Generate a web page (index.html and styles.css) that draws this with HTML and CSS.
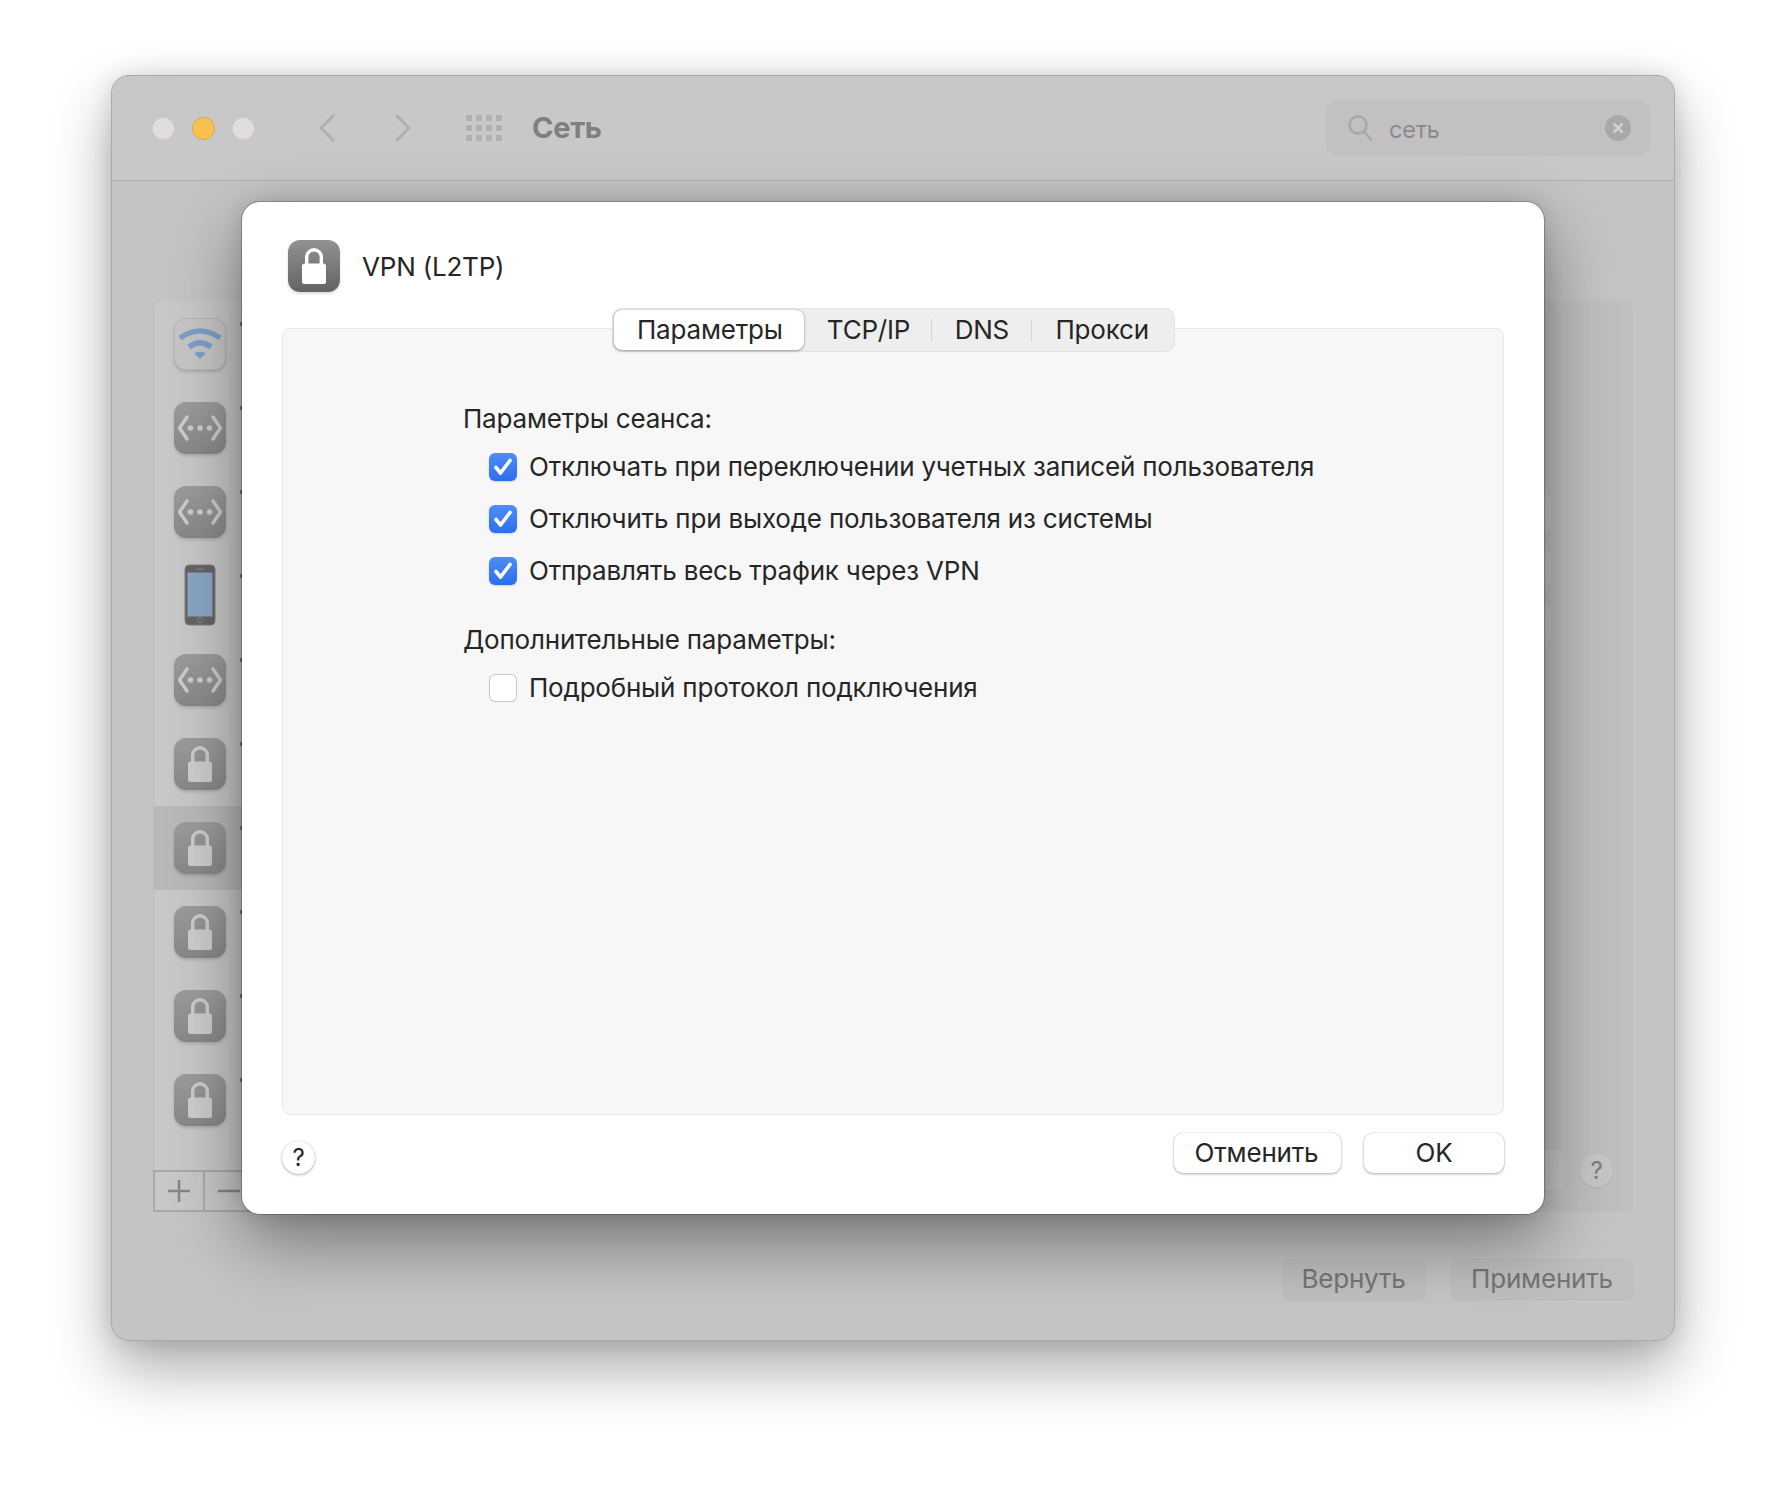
FILE: index.html
```html
<!DOCTYPE html>
<html lang="ru">
	<head>
		<meta charset="UTF-8" />
		<title>Сеть</title>
		<link rel="stylesheet" href="styles.css">
	</head>
	<body>
		<svg class="defs" width="0" height="0">
			<symbol id="lock" viewBox="0 0 52 52">
				<path d="M18.700 25v-8a7.300 7.300 0 0 1 14.600 0v8" fill="none" stroke="currentColor" stroke-width="3.400" />
				<rect x="14" y="23.500" width="24" height="20.500" rx="2.500" fill="currentColor" />
			</symbol>
			<symbol id="net" viewBox="0 0 52 52">
				<path d="M13 15 5.500 26 13 37M39 15l7.500 11L39 37" fill="none" stroke="currentColor" stroke-width="3.400" stroke-linecap="round" stroke-linejoin="round" />
				<circle cx="16.500" cy="26" r="2.800" fill="currentColor" />
				<circle cx="26" cy="26" r="2.800" fill="currentColor" />
				<circle cx="35.500" cy="26" r="2.800" fill="currentColor" />
			</symbol>
		</svg>

		<div class="window">
			<div class="titlebar">
				<div class="lights">
					<span class="light"></span>
					<span class="light light-min"></span>
					<span class="light"></span>
				</div>
				<svg class="nav-arrow" width="20" height="28" viewBox="0 0 20 28"><path d="M16 2 4 14l12 12" /></svg>
				<svg class="nav-arrow nav-forward" width="20" height="28" viewBox="0 0 20 28"><path d="M4 2l12 12L4 26" /></svg>
				<div class="grid-icon">
					<i></i><i></i><i></i><i></i><i></i><i></i><i></i><i></i><i></i><i></i><i></i><i></i>
				</div>
				<div class="win-title">Сеть</div>
				<div class="search">
					<svg class="search-icon" width="26" height="28" viewBox="0 0 26 28"><circle cx="11" cy="11" r="8.500" /><path d="M17 17.500l7 8" /></svg>
					<span class="search-text">сеть</span>
					<svg class="search-clear" width="26" height="26" viewBox="0 0 26 26"><circle cx="13" cy="13" r="13" /><path d="M8.500 8.500l9 9M17.500 8.500l-9 9" /></svg>
				</div>
			</div>

			<div class="win-body">
				<div class="panes">
					<div class="sidebar">
						<div class="rows">
							<div class="row">
								<div class="tile tile-wifi">
									<svg width="50" height="50" viewBox="1 1 50 50"><path d="M6 20Q26 6 46 20" /><path d="M15 29Q26 20.500 37 29" /><path class="wifi-dot" d="M26 41l-6-5.500Q26 31.500 32 35.500z" /></svg>
								</div>
							</div>
							<div class="row"><svg class="tile tile-grey"><use href="#net" /></svg></div>
							<div class="row"><svg class="tile tile-grey"><use href="#net" /></svg></div>
							<div class="row">
								<div class="phone-box">
									<svg width="32" height="62" viewBox="0 0 32 62">
										<rect x="1" y="1" width="30" height="60" rx="4" fill="#646464" stroke="#7f7f7f" />
										<rect x="3.500" y="8.500" width="25" height="44" fill="#8aa6c6" />
										<rect x="11" y="4.500" width="10" height="1" fill="#888" />
										<circle cx="16" cy="56.500" r="2.500" fill="none" stroke="#888" />
									</svg>
								</div>
							</div>
							<div class="row"><svg class="tile tile-grey"><use href="#net" /></svg></div>
							<div class="row"><svg class="tile tile-grey"><use href="#lock" /></svg></div>
							<div class="row row-selected"><svg class="tile tile-grey"><use href="#lock" /></svg></div>
							<div class="row"><svg class="tile tile-grey"><use href="#lock" /></svg></div>
							<div class="row"><svg class="tile tile-grey"><use href="#lock" /></svg></div>
							<div class="row"><svg class="tile tile-grey"><use href="#lock" /></svg></div>
						</div>
						<div class="list-tools">
							<div class="tool"><svg width="22" height="22" viewBox="0 0 22 22"><path d="M0 11h22M11 0v22" /></svg></div>
							<div class="tool"><svg width="22" height="22" viewBox="0 0 22 22"><path d="M0 11h22" /></svg></div>
						</div>
					</div>
					<div class="detail">
						<div class="ghost-rows">
							<div class="ghost-row"></div>
							<div class="ghost-row"></div>
							<div class="ghost-row"></div>
						</div>
						<div class="detail-foot">
							<div class="ghost-btn"></div>
							<div class="help help-dim">?</div>
						</div>
					</div>
				</div>
				<div class="win-foot">
					<div class="btn-dim btn-revert">Вернуть</div>
					<div class="btn-dim btn-apply">Применить</div>
				</div>
			</div>

			<div class="sheet">
				<div class="sheet-head">
					<svg class="tile tile-dark"><use href="#lock" /></svg>
					<div class="sheet-title">VPN (L2TP)</div>
				</div>
				<div class="tabs">
					<div class="tab tab-active">Параметры</div>
					<div class="tab tab-tcp">TCP/IP</div>
					<span class="tab-sep"></span>
					<div class="tab tab-dns">DNS</div>
					<span class="tab-sep"></span>
					<div class="tab tab-proxy">Прокси</div>
				</div>
				<div class="tab-panel">
					<div class="group-label">Параметры сеанса:</div>
					<label class="check-row">
						<span class="check"><svg width="28" height="28" viewBox="0 0 28 28"><path d="M7 14.500l4.500 5.500L21 7.500" /></svg></span>
						Отключать при переключении учетных записей пользователя
					</label>
					<label class="check-row">
						<span class="check"><svg width="28" height="28" viewBox="0 0 28 28"><path d="M7 14.500l4.500 5.500L21 7.500" /></svg></span>
						Отключить при выходе пользователя из системы
					</label>
					<label class="check-row">
						<span class="check"><svg width="28" height="28" viewBox="0 0 28 28"><path d="M7 14.500l4.500 5.500L21 7.500" /></svg></span>
						Отправлять весь трафик через VPN
					</label>
					<div class="group-label group-second">Дополнительные параметры:</div>
					<label class="check-row">
						<span class="check check-off"></span>
						Подробный протокол подключения
					</label>
				</div>
				<div class="sheet-foot">
					<div class="help">?</div>
					<div class="btn btn-cancel">Отменить</div>
					<div class="btn btn-ok">OK</div>
				</div>
			</div>
		</div>
	</body>
</html>
```

FILE: styles.css
```css
* {
	box-sizing: border-box;
}
html,
body {
	margin: 0;
	height: 1488px;
	overflow: hidden;
	background-color: #fff;
}
body {
	padding: 75px 0 0 111px;
	font-family: Inter, "Noto Sans", sans-serif;
	font-size: 26px;
	letter-spacing: -0.2px;
	color: #262626;
}
.defs {
	position: absolute;
}

/* back window */
.window {
	position: relative;
	width: 1564px;
	height: 1266px;
	border: 1px solid #aaa;
	border-radius: 18px;
	background-color: #c4c4c4;
	box-shadow: 0 28px 60px rgba(0, 0, 0, 0.33), 0 0 24px rgba(0, 0, 0, 0.12);
}
.titlebar {
	display: flex;
	align-items: center;
	height: 105px;
	padding: 0 24px 0 40px;
	background-color: #c9c8c9;
	border-bottom: 1px solid #b1b1b1;
	border-radius: 17px 17px 0 0;
}
.lights {
	display: flex;
	gap: 17px;
}
.light {
	width: 23px;
	height: 23px;
	border-radius: 50%;
	background-color: #e0dcdf;
	border: 1px solid #d0cdd0;
}
.light-min {
	background-color: #f6c14f;
	border-color: #dba83f;
}
.nav-arrow {
	margin-left: 62px;
	fill: none;
	stroke: #b0b0b0;
	stroke-width: 3;
	stroke-linecap: round;
	stroke-linejoin: round;
}
.nav-forward {
	margin-left: 56px;
}
.grid-icon {
	display: grid;
	grid-template-columns: repeat(4, 6px);
	grid-auto-rows: 6px;
	gap: 4px;
	margin-left: 53px;
}
.grid-icon i {
	background-color: #b0b0b0;
	border-radius: 1px;
}
.win-title {
	margin-left: 30px;
	margin-bottom: 2px;
	font-size: 29px;
	font-weight: 700;
	letter-spacing: -0.3px;
	color: #7f7f7f;
}
.search {
	display: flex;
	align-items: center;
	width: 324px;
	height: 56px;
	margin-left: auto;
	padding: 0 19px 0 21px;
	border-radius: 12px;
	background-color: #c2c0c2;
}
.search-icon {
	fill: none;
	stroke: #a8a8a8;
	stroke-width: 2.500;
	stroke-linecap: round;
}
.search-text {
	margin: 3px 0 0 16px;
	font-size: 23.500px;
	color: #8a8a8a;
}
.search-clear {
	margin-left: auto;
}
.search-clear circle {
	fill: #a9a9a9;
}
.search-clear path {
	fill: none;
	stroke: #cfcfcf;
	stroke-width: 2.500;
}

.win-body {
	display: flex;
	flex-direction: column;
	height: 1159px;
	padding: 120px 41px 0;
}
.panes {
	display: flex;
	justify-content: space-between;
	height: 911px;
}
.sidebar {
	display: flex;
	flex-direction: column;
	width: 400px;
	background-color: #c8c8c8;
	border-left: 1px solid #bcbcbc;
	border-radius: 6px 0 0 0;
}
.rows {
	flex: 1;
	padding-top: 1px;
}
.row {
	display: flex;
	align-items: center;
	gap: 14px;
	height: 84px;
	padding-left: 20px;
}
.row::after {
	content: "";
	align-self: flex-start;
	width: 2px;
	height: 4px;
	margin-top: 20px;
	background-color: #777;
}
.row-selected {
	background-color: #b9b9b9;
}
.tile {
	flex: none;
	width: 52px;
	height: 52px;
	border-radius: 12px;
	box-shadow: 0 2px 3px rgba(0, 0, 0, 0.14);
}
.tile-grey {
	color: #cdcdcd;
	background: linear-gradient(#9c9c9c, #888);
}
.tile-dark {
	color: #fff;
	background: linear-gradient(#929292, #636363);
}
.tile-wifi {
	background-color: #c6c6c6;
	border: 1px solid #b7b7b7;
}
.tile-wifi svg {
	display: block;
}
.tile-wifi path {
	fill: none;
	stroke: #7f9fc9;
	stroke-width: 5.500;
}
.tile-wifi .wifi-dot {
	fill: #7f9fc9;
	stroke: none;
}
.phone-box {
	display: flex;
	justify-content: center;
	width: 52px;
	margin-bottom: 2px;
}
.list-tools {
	display: flex;
	height: 42px;
	margin-left: -1px;
	border: 2px solid #a9a9a9;
	border-width: 2px 0 2px 2px;
}
.tool {
	display: flex;
	align-items: center;
	justify-content: center;
	width: 50px;
	border-right: 2px solid #a9a9a9;
}
.tool path {
	fill: none;
	stroke: #868686;
	stroke-width: 2.500;
}
.detail {
	display: flex;
	flex-direction: column;
	width: 360px;
	padding: 194px 20px 0 0;
	background-color: #bfbfbf;
	border-radius: 0 6px 6px 0;
}
.ghost-rows {
	display: flex;
	flex-direction: column;
	gap: 19px;
	align-items: flex-end;
	flex: 1;
	padding-right: 62px;
}
.ghost-row {
	width: 20px;
	height: 36px;
	background-color: #c6c6c6;
	border-radius: 0 6px 6px 0;
}
.detail-foot {
	display: flex;
	align-items: center;
	justify-content: flex-end;
	gap: 16px;
	height: 42px;
	margin-bottom: 21px;
}
.ghost-btn {
	width: 30px;
	height: 40px;
	background-color: #c6c6c6;
	border-radius: 0 8px 8px 0;
}
.help {
	display: flex;
	flex: none;
	align-items: center;
	justify-content: center;
	width: 33px;
	height: 33px;
	border-radius: 50%;
	background-color: #fff;
	box-shadow: 0 1px 3px rgba(0, 0, 0, 0.3), 0 0 1px rgba(0, 0, 0, 0.2);
	font-size: 24px;
}
.help-dim {
	background-color: #c6c6c6;
	color: #7c7c7c;
	box-shadow: 0 1px 2px rgba(0, 0, 0, 0.08);
}
.win-foot {
	display: flex;
	justify-content: flex-end;
	gap: 23px;
	margin-top: 46px;
	margin-right: -1px;
}
.btn-dim {
	display: flex;
	align-items: center;
	justify-content: center;
	height: 41px;
	border-radius: 9px;
	background-color: #bfbfbf;
	box-shadow: 0 1px 1px rgba(0, 0, 0, 0.07), 0 0 0 1px rgba(255, 255, 255, 0.06);
	color: #757575;
}
.btn-revert {
	width: 145px;
	padding-right: 2px;
}
.btn-apply {
	width: 184px;
}

/* sheet over the window */
.sheet {
	position: absolute;
	left: 130px;
	top: 126px;
	width: 1302px;
	height: 1012px;
	padding: 38px 40px 0;
	background-color: #fff;
	border-radius: 18px;
	box-shadow: 0 0 0 1px rgba(0, 0, 0, 0.22), 0 26px 70px rgba(0, 0, 0, 0.42), 0 0 20px rgba(0, 0, 0, 0.12);
}
.sheet-head {
	display: flex;
	align-items: center;
	gap: 22px;
	height: 52px;
	padding-left: 6px;
}
.sheet-title {
	font-size: 26px;
}
.tabs {
	position: relative;
	z-index: 1;
	display: flex;
	align-items: center;
	width: 563px;
	height: 44px;
	margin: 16px auto -24px;
	padding: 0 2px;
	border-radius: 10px;
	background-color: #eeeeee;
	box-shadow: inset 0 0 0 1px #e4e4e4;
}
.tab {
	display: flex;
	justify-content: center;
	padding-bottom: 2px;
}
.tab-active {
	width: 191px;
	height: 40px;
	padding-left: 2px;
	align-items: center;
	background-color: #fff;
	border-radius: 8px;
	box-shadow: 0 1px 3px rgba(0, 0, 0, 0.35), 0 0 1px rgba(0, 0, 0, 0.25);
}
.tab-tcp {
	width: 127px;
	padding-left: 2px;
}
.tab-dns {
	width: 99px;
	padding-left: 1px;
}
.tab-proxy {
	width: 141px;
}
.tab-sep {
	width: 1px;
	height: 23px;
	background-color: #d4d4d4;
}
.tab-panel {
	height: 787px;
	padding: 74px 0 0 180px;
	background-color: #f7f7f7;
	border: 1px solid #e8e8e8;
	border-radius: 8px;
}
.group-label {
	height: 32px;
	line-height: 32px;
}
.group-second {
	margin-top: 40px;
}
.check-row {
	display: flex;
	align-items: center;
	gap: 12px;
	height: 28px;
	margin: 0 0 24px 26px;
}
.group-label + .check-row {
	margin-top: 17px;
}
.check {
	flex: none;
	width: 28px;
	height: 28px;
	margin-top: 2px;
	border-radius: 6px;
	background: linear-gradient(#4e8ef6, #2c6ef0);
	box-shadow: 0 1px 2px rgba(0, 0, 0, 0.15);
}
.check svg {
	display: block;
	fill: none;
	stroke: #fff;
	stroke-width: 3.600;
	stroke-linecap: round;
	stroke-linejoin: round;
}
.check-off {
	background: #fff;
	box-shadow: inset 0 0 0 1px #c8c8c8;
}
.sheet-foot {
	display: flex;
	align-items: flex-start;
	padding-top: 18px;
}
.sheet-foot .help {
	margin: 8px auto 0 0;
}
.btn {
	display: flex;
	align-items: center;
	justify-content: center;
	height: 40px;
	padding-bottom: 2px;
	border-radius: 9px;
	background-color: #fff;
	box-shadow: 0 1px 3px rgba(0, 0, 0, 0.3), 0 0 1px rgba(0, 0, 0, 0.25);
}
.btn-cancel {
	width: 167px;
	margin-right: 23px;
	padding-right: 2px;
}
.btn-ok {
	width: 140px;
}
```
